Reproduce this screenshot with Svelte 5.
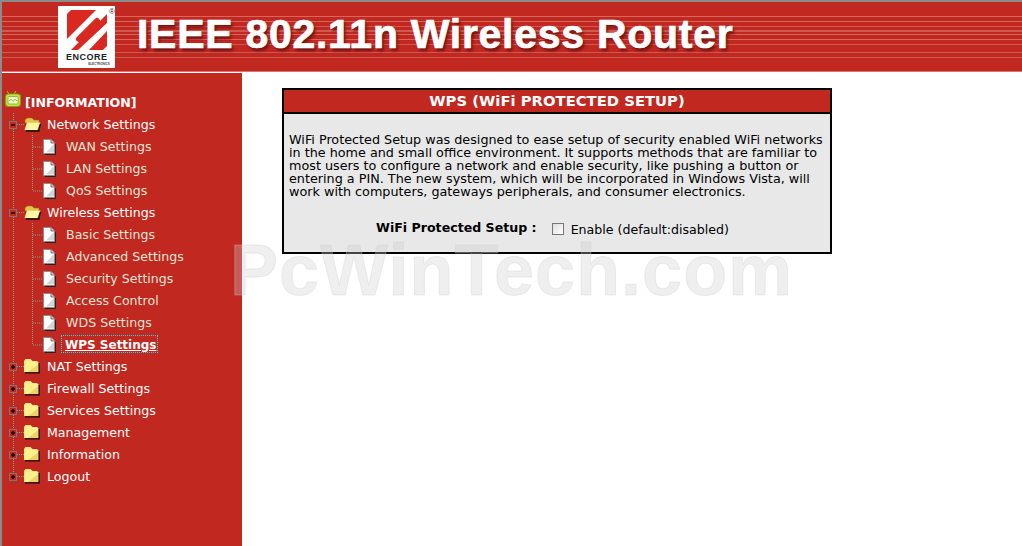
<script>
  const tree = [
    { label: 'Network Settings', open: true, children: [
      { label: 'WAN Settings' }, { label: 'LAN Settings' }, { label: 'QoS Settings' }
    ] },
    { label: 'Wireless Settings', open: true, children: [
      { label: 'Basic Settings' }, { label: 'Advanced Settings' }, { label: 'Security Settings' },
      { label: 'Access Control' }, { label: 'WDS Settings' }, { label: 'WPS Settings', active: true }
    ] },
    { label: 'NAT Settings' },
    { label: 'Firewall Settings' },
    { label: 'Services Settings' },
    { label: 'Management' },
    { label: 'Information' },
    { label: 'Logout' }
  ];
</script>

<div class="page">
  <header class="banner">
    <div class="logo">
      <svg width="57" height="62" viewBox="0 0 57 62">
        <rect x="9" y="4" width="40" height="40" fill="#d8281f" />
        <!-- white band of the "e", then the red slit inside it -->
        <path d="M9 33 L38 4 H49 V8 L13 44 H9Z" fill="#fff" />
        <path d="M21 33 L39 15" stroke="#d8281f" stroke-width="6" stroke-linecap="round" />
        <path d="M20 44 L49 17 V25 L31 44Z" fill="#fff" />
        <path d="M9 4 h4 l-4 4z M45 44 h4 v-4z" fill="#fff" />
        <text x="28.5" y="54" text-anchor="middle" textLength="41" class="encore">ENCORE</text>
        <text x="41" y="59" text-anchor="middle" class="electronics">ELECTRONICS</text>
      </svg>
      <span class="reg">®</span>
    </div>
    <h1>IEEE 802.11n Wireless Router</h1>
  </header>

  <div class="columns">
    <nav class="sidebar">
      <div class="root">
        <svg width="19" height="22" viewBox="0 0 19 22">
          <path d="M7 3 L5 0 M12 3 L14 0" stroke="#a4c92c" stroke-width="1" />
          <rect x="3.5" y="3" width="15" height="12.5" rx="3" fill="#c4e44c" stroke="#7aa414" stroke-width="1.2" />
          <rect x="6" y="5.5" width="10" height="7.5" rx="1" fill="#f0f8cc" stroke="#82ac1c" stroke-width=".8" />
          <path d="M7 10 l2-2 2 2.5 2-2.5 2 2" fill="none" stroke="#8ab320" stroke-width=".8" />
        </svg>
        <span>[INFORMATION]</span>
      </div>

      {#each tree as item, i}
        <div class="row">
          <svg class="guide" width="45" height="22" viewBox="0 0 45 22">
            <path d={i === tree.length - 1 ? 'M11.5 0V8' : 'M11.5 0V22'} class="dots" />
            <path d="M15 11.5H22" class="dots" />
            <rect x="7.5" y="8.5" width="7" height="7" fill="#c12820" stroke="#777" />
            <path d="M9 12H13" stroke="#100" stroke-width="1.4" />
            {#if !item.open}
              <path d="M11 10V14" stroke="#100" stroke-width="1.4" />
            {/if}
            {#if item.open}
              <path d="M23 7 l2-2 h5 l2 2 h5 v3 h-14z" fill="#e4c44a" stroke="#8a7014" stroke-width=".6" />
              <path d="M25 9.5 H38.5 L35.5 17 H22.5Z" fill="#fff6a0" />
              <path d="M27 16.5 H35 L38 10 V16.5 Z" fill="#e4c95a" />
              <path d="M24 18 H37 V16 L38.5 11" fill="none" stroke="#111" stroke-width="1.5" />
            {:else}
              <path d="M22 6 l1.5-2 h5 l2 2 h5 v3 h-13.5z" fill="#ffe98a" />
              <rect x="22" y="7" width="14.5" height="10" fill="#fff08c" />
              <path d="M26 17 H36.5 V9 Z" fill="#ecd26a" />
              <path d="M23 17.8 H37.2 V8" fill="none" stroke="#111" stroke-width="1.3" />
            {/if}
          </svg>
          <span class="label">{item.label}</span>
        </div>

        {#if item.children}
          {#each item.children as child, j}
            <div class="row">
              <svg class="guide" width="62" height="22" viewBox="0 0 62 22">
                <path d="M11.5 0V22" class="dots" />
                <path d={j === item.children.length - 1 ? 'M30.5 0V12' : 'M30.5 0V22'} class="dots" />
                <path d="M31 12H41" class="dots" />
                <path d="M41.5 4.5 H49 L52.5 8 V18.5 H41.5Z" fill="#fff" stroke="#8c8c8c" />
                <path d="M44 17.5 L52 9 V17.5Z" fill="#d4d4d4" />
                <path d="M49 4.5 V8 H52.5" fill="#ccc" stroke="#555" stroke-width=".8" />
                <path d="M53.5 9 V19.5 H43" fill="none" stroke="#222" />
              </svg>
              {#if child.active}
                <span class="label child active">{child.label}</span>
              {:else}
                <span class="label child">{child.label}</span>
              {/if}
            </div>
          {/each}
        {/if}
      {/each}
    </nav>

    <main class="content">
      <section class="panel">
        <h2>WPS (WiFi PROTECTED SETUP)</h2>
        <div class="body">
          <p>
            WiFi Protected Setup was designed to ease setup of security enabled WiFi networks<br />
            in the home and small office environment. It supports methods that are familiar to<br />
            most users to configure a network and enable security, like pushing a button or<br />
            entering a PIN. The new system, which will be incorporated in Windows Vista, will<br />
            work with computers, gateways peripherals, and consumer electronics.
          </p>
          <div class="field">
            <b>WiFi Protected Setup :</b>
            <input type="checkbox" />
            <span>Enable (default:disabled)</span>
          </div>
        </div>
      </section>
    </main>
  </div>

  <div class="watermark">PcWinTech.com</div>
</div>

<style>
  :global(body) {
    margin: 0;
    background: #fff;
  }

  .page {
    position: relative;
    box-sizing: border-box;
    width: 1022px;
    height: 546px;
    overflow: hidden;
    border-top: 2px solid #8c8c8c;
    border-left: 2px solid #8c8c8c;
    font-family: "DejaVu Sans", Verdana, sans-serif;
    font-size: 12.6px;
  }

  .banner {
    display: flex;
    align-items: flex-start;
    height: 69px;
    padding-left: 56px;
    border-bottom: 1px solid #e2706a;
    background-color: #c12820;
    background-image: linear-gradient(
      to bottom,
      transparent 14px, #d8655e 14px, #d8655e 15px,
      transparent 15px, transparent 19px, #d8655e 19px, #d8655e 20px,
      transparent 20px, transparent 24px, #d05a52 24px, #d05a52 25px,
      transparent 25px, transparent 28px, #d05a52 28px, #d05a52 30px,
      transparent 30px, transparent 32px, #d8655e 32px, #d8655e 33px,
      transparent 33px, transparent 37px, #d8655e 37px, #d8655e 38px,
      transparent 38px, transparent 42px, #d05a52 42px, #d05a52 43px,
      transparent 43px, transparent 50px, #d05a52 50px, #d05a52 51px,
      transparent 51px, transparent 55px, #d05a52 55px, #d05a52 56px,
      transparent 56px
    );
  }

  .logo {
    position: relative;
    width: 57px;
    height: 62px;
    margin-top: 4px;
    background: #fff;
  }

  .logo svg {
    display: block;
  }

  .encore {
    font: bold 9px "Liberation Sans", sans-serif;
    fill: #222;
  }

  .electronics {
    font: bold 3px "Liberation Sans", sans-serif;
    fill: #444;
  }

  .reg {
    position: absolute;
    top: 1px;
    left: 51px;
    font: 8px "Liberation Sans", sans-serif;
    color: #333;
  }

  h1 {
    margin: 8px 0 0 22px;
    font: bold 41px "Liberation Sans", sans-serif;
    letter-spacing: 0.72px;
    line-height: 48px;
    color: #fff;
    white-space: nowrap;
    -webkit-text-stroke: 0.7px #fff;
    text-shadow: 2px 3px 3px #6e1512;
  }

  .columns {
    display: flex;
    height: 474px;
    border-top: 1px solid #fff;
  }

  .sidebar {
    box-sizing: border-box;
    width: 240px;
    flex: none;
    padding-top: 18px;
    background: #c12820;
  }

  .root,
  .row {
    display: flex;
    align-items: center;
    height: 22px;
    color: #fff;
    white-space: nowrap;
  }

  .root {
    font-weight: bold;
    gap: 4px;
  }

  .guide {
    flex: none;
    display: block;
  }

  .dots {
    fill: none;
    stroke: #8f9a8a;
    stroke-dasharray: 1 1;
  }

  .child {
    margin-left: 2px;
    color: #dfe6d6;
  }

  .active {
    margin-left: -2px;
    padding: 2px 0 0 3px;
    font-size: 12px;
    font-weight: bold;
    color: #fff;
    text-decoration: underline;
    outline: 1px dotted #25d5e5;
  }

  .content {
    flex: 1;
    padding: 15px 0 0 40px;
  }

  .panel {
    box-sizing: border-box;
    width: 550px;
    height: 166px;
    border: 2px solid #000;
    background: #e8e8e8;
  }

  h2 {
    margin: 0;
    height: 22px;
    border-bottom: 2px solid #000;
    background: #c12820;
    color: #fff;
    font-size: 14.8px;
    line-height: 22px;
    text-align: center;
  }

  .body {
    padding: 19px 5px 0;
    color: #000;
  }

  p {
    margin: 0;
    font-size: 12.78px;
    line-height: 13px;
    white-space: nowrap;
  }

  .field {
    display: flex;
    align-items: center;
    margin-top: 21px;
    padding-left: 87px;
    height: 20px;
  }

  .field b {
    margin-top: -3px;
    font-size: 12.6px;
  }

  .field input {
    appearance: none;
    box-sizing: border-box;
    width: 12px;
    height: 12px;
    margin: 0 7px 0 15px;
    border: 1px solid #777;
    background: linear-gradient(135deg, #ddd, #fff);
  }

  .watermark {
    position: absolute;
    top: 226px;
    left: 228px;
    font: bold 72px/84px "Liberation Sans", sans-serif;
    letter-spacing: 1px;
    color: rgba(205, 205, 205, 0.33);
    -webkit-text-stroke: 1px rgba(205, 205, 205, 0.33);
    white-space: nowrap;
    pointer-events: none;
  }
</style>
